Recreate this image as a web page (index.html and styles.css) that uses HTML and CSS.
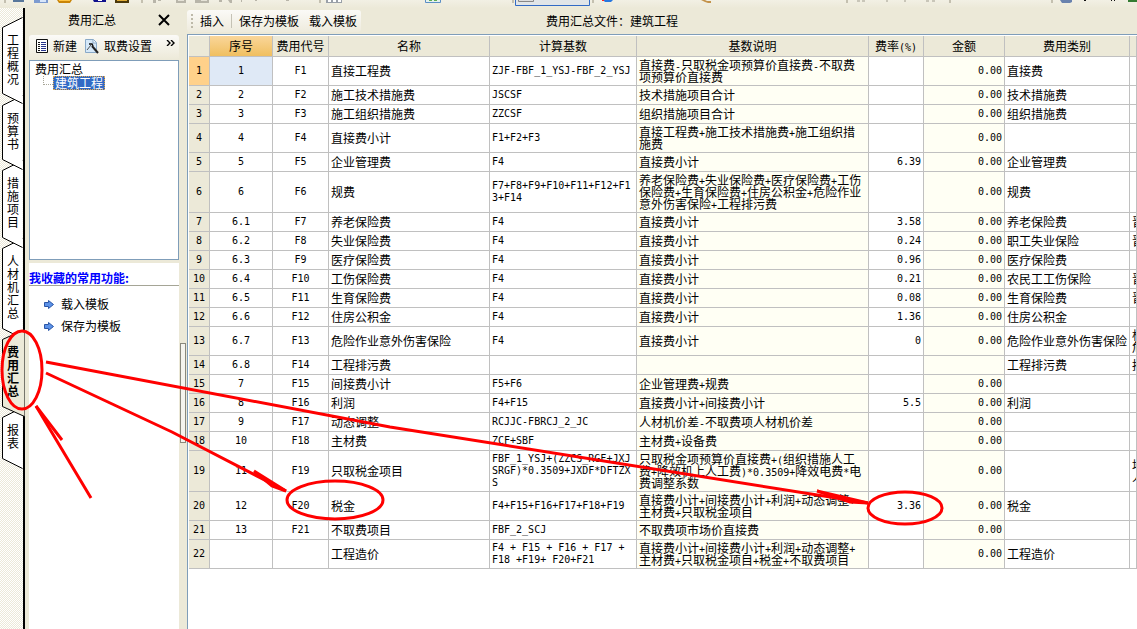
FILE: index.html
```html
<!DOCTYPE html>
<html lang="zh-CN">
<head>
<meta charset="utf-8">
<title>费用汇总</title>
<link rel="stylesheet" href="styles.css">
</head>
<body>
<header class="strip">
<svg class="strip-icons" width="1137" height="9" aria-hidden="true">
<g fill="#c4c0b0"><path d="M4 0h2v3h-2zM141 0h2v3h-2zM319 0h2v3h-2zM512 0h2v3h-2zM592 0h2v3h-2zM846 0h2v3h-2zM949 0h2v3h-2zM1051 0h2v3h-2z"/></g>
<path d="M13 0h11v2H13z" fill="#58779b"/><path d="M34 0h14v3H34z" fill="#7d9bd0"/><path d="M40 0h6v2h-6z" fill="#d8e6fa"/>
<path d="M57 0h15l-2 3H59z" fill="#c98508"/><path d="M59 0h11v1H59z" fill="#ffc444"/>
<path d="M93 0h13v2H94z" fill="#10108c"/><path d="M98 0h4v1h-4z" fill="#fff"/><path d="M115 0h14v3h-14z" fill="#4b380b"/><path d="M117 0h10v1h-10z" fill="#e0ad38"/>
<g fill="#b8b5a9"><path d="M153 0h3v3h-3zM158 0h3v1h-3zM176 0h10v3h-10zM195 0h14v3h-14zM219 0h3v2h-3zM228 0h4v3h-2zM241 0h1v2h-1zM255 0h2v1h-2zM286 0h3v1h-3z"/></g>
<path d="M178 0h6v1h-6zM201 0h6v1h-6z" fill="#e6e3d8"/>
<path d="M326 0h16v3h-16z" fill="#9aa0a8"/><path d="M328 0h3v2h-3zM333 0h3v2h-3zM338 0h3v2h-3z" fill="#fff"/>
<path d="M425.500 -1v3.500h15V-1" fill="#e5f1ee" stroke="#5b8fc6"/><path d="M429 0h3v1h-3zM434 0h3v1h-3z" fill="#5ead55"/>
<path d="M515.500-1v6.500h74V-1" fill="#e1e5e8" stroke="#316ac5"/><path d="M518.500 -1v2.500h15V-1" fill="#ddd" stroke="#888"/>
<path d="M603 0h10l-2 2h-6z" fill="#2878df"/><path d="M602 0h2v1h-2z" fill="#f22"/>
<path d="M701 0h4l2 1h4v2h-3l-3-1z" fill="#c3924b"/>
<g fill="#c9c6b9"><path d="M857 0h3v2h-3zM862 0h3v2h-3zM886 0h2v2h-2zM904 0h2v2h-2zM926 0h3v2h-3zM932 0h3v2h-3z"/></g>
<path d="M1060 0h12v2l-2 1h-8z" fill="#6982ae"/><path d="M1084 0h2v1h-2zM1111 0h1v1h-1zM1114 0h1v1h-1z" fill="#111"/><path d="M1128 0h9v2h-9z" fill="#347b32"/>
</svg>
</header>

<div class="workspace">
<nav class="tabs" aria-label="页面">
<button class="tab"><svg class="tab-shape" width="24" height="87"><path d="M22.500 .5L2.500 10.500V76.500L22.500 86.500"/></svg><span>工程概况</span></button>
<button class="tab"><svg class="tab-shape" width="24" height="75"><path d="M22.500 .5L2.500 10.500V64.500L22.500 74.500"/></svg><span>预算书</span></button>
<button class="tab"><svg class="tab-shape" width="24" height="88"><path d="M22.500 .5L2.500 10.500V77.500L22.500 87.500"/></svg><span>措施项目</span></button>
<button class="tab"><svg class="tab-shape" width="24" height="101"><path d="M22.500 .5L2.500 10.500V90.500L22.500 100.500"/></svg><span>人材机汇总</span></button>
<button class="tab tab-active"><svg class="tab-shape" width="24" height="88"><path d="M24.500 .5L2.500 10.500V77.500L24.500 87.500"/></svg><span>费用汇总</span></button>
<button class="tab"><svg class="tab-shape" width="24" height="62"><path d="M22.500 .5L2.500 10.500V51.500L22.500 61.500"/></svg><span>报表</span></button>
</nav>

<aside class="side">
<div class="side-title"><h2>费用汇总</h2><button class="icon-button" aria-label="关闭"><svg width="12" height="12"><path d="M1 1l10 10M11 1L1 11" stroke="#000" stroke-width="2"/></svg></button></div>
<div class="side-tools">
<button class="tool"><svg width="13" height="14"><path d="M.5.500h11v13H.5z" fill="#fff" stroke="#111"/><path d="M2 3h2M2 5h2M2 7h2M2 9h2M2 11h2" stroke="#111" transform="translate(0 .5)"/><path d="M5 3h5M5 5h5M5 7h5M5 9h5M5 11h5" stroke="#26348c" transform="translate(0 .5)"/></svg>新建</button>
<button class="tool"><svg width="15" height="15"><path d="M.5.500h8l3 3v10H.5z" fill="#d5e8f8" stroke="#89a9c8"/><path d="M8 1v3h3" fill="#fff" stroke="#89a9c8"/><path d="M2 11l4-5" fill="none" stroke="#555"/><path d="M4 5h3l1 2" fill="none" stroke="#111" stroke-width="1.500"/><path d="M7 7l6 7" stroke="#222" stroke-width="2"/></svg>取费设置</button>
<button class="more" aria-label="更多"><svg width="9" height="6"><path d="M1 0l3 3-3 3M5 0l3 3-3 3" fill="none" stroke="#000" stroke-width="1.400"/></svg></button>
</div>
<div class="tree"><div>费用汇总</div><div class="tree-child"><i class="branch"></i><span class="selected">建筑工程</span></div></div>
<section class="favorites">
<h3>我收藏的常用功能:</h3>
<button class="fav"><svg width="10" height="9"><path d="M.5 2.500h4V.5L9.500 4.500 4.500 8.500v-2h-4z" fill="#5c92e8" stroke="#2a55a6"/></svg>载入模板</button>
<button class="fav"><svg width="10" height="9"><path d="M.5 2.500h4V.5L9.500 4.500 4.500 8.500v-2h-4z" fill="#5c92e8" stroke="#2a55a6"/></svg>保存为模板</button>
</section>
</aside>
<div class="splitter"><i class="grip"></i></div>

<main class="main">
<div class="main-head">
<div class="main-tools"><i class="dots"></i><button class="text-button">插入</button><i class="sep"></i><button class="text-button">保存为模板</button><button class="text-button">载入模板</button></div>
<h1>费用汇总文件：建筑工程</h1>
</div>
<div class="grid">
<table>
<colgroup><col class="c-row"><col class="c-seq"><col class="c-code"><col class="c-name"><col class="c-base"><col class="c-desc"><col class="c-rate"><col class="c-sum"><col class="c-type"><col></colgroup>
<thead><tr><th></th><th class="current">序号</th><th>费用代号</th><th>名称</th><th>计算基数</th><th>基数说明</th><th>费率<b>(%)</b></th><th>金额</th><th>费用类别</th><th></th></tr></thead>
<tbody>
<tr class="two first"><th>1</th><td>1</td><td>F1</td><td>直接工程费</td><td>ZJF-FBF_1_YSJ-FBF_2_YSJ</td><td>直接费<b>-</b>只取税金项预算价直接费<b>-</b>不取费<br>项预算价直接费</td><td></td><td>0.00</td><td>直接费</td><td></td></tr>
<tr><th>2</th><td>2</td><td>F2</td><td>施工技术措施费</td><td>JSCSF</td><td>技术措施项目合计</td><td></td><td>0.00</td><td>技术措施费</td><td></td></tr>
<tr><th>3</th><td>3</td><td>F3</td><td>施工组织措施费</td><td>ZZCSF</td><td>组织措施项目合计</td><td></td><td>0.00</td><td>组织措施费</td><td></td></tr>
<tr class="two"><th>4</th><td>4</td><td>F4</td><td>直接费小计</td><td>F1+F2+F3</td><td>直接工程费<b>+</b>施工技术措施费<b>+</b>施工组织措<br>施费</td><td></td><td>0.00</td><td></td><td></td></tr>
<tr><th>5</th><td>5</td><td>F5</td><td>企业管理费</td><td>F4</td><td>直接费小计</td><td>6.39</td><td>0.00</td><td>企业管理费</td><td></td></tr>
<tr class="three"><th>6</th><td>6</td><td>F6</td><td>规费</td><td>F7+F8+F9+F10+F11+F12+F1<br>3+F14</td><td>养老保险费<b>+</b>失业保险费<b>+</b>医疗保险费<b>+</b>工伤<br>保险费<b>+</b>生育保险费<b>+</b>住房公积金<b>+</b>危险作业<br>意外伤害保险<b>+</b>工程排污费</td><td></td><td>0.00</td><td>规费</td><td></td></tr>
<tr><th>7</th><td>6.1</td><td>F7</td><td>养老保险费</td><td>F4</td><td>直接费小计</td><td>3.58</td><td>0.00</td><td>养老保险费</td><td>晋</td></tr>
<tr><th>8</th><td>6.2</td><td>F8</td><td>失业保险费</td><td>F4</td><td>直接费小计</td><td>0.24</td><td>0.00</td><td>职工失业保险</td><td>晋</td></tr>
<tr><th>9</th><td>6.3</td><td>F9</td><td>医疗保险费</td><td>F4</td><td>直接费小计</td><td>0.96</td><td>0.00</td><td>医疗保险费</td><td></td></tr>
<tr><th>10</th><td>6.4</td><td>F10</td><td>工伤保险费</td><td>F4</td><td>直接费小计</td><td>0.21</td><td>0.00</td><td>农民工工伤保险</td><td>晋</td></tr>
<tr><th>11</th><td>6.5</td><td>F11</td><td>生育保险费</td><td>F4</td><td>直接费小计</td><td>0.08</td><td>0.00</td><td>生育保险费</td><td>晋</td></tr>
<tr><th>12</th><td>6.6</td><td>F12</td><td>住房公积金</td><td>F4</td><td>直接费小计</td><td>1.36</td><td>0.00</td><td>住房公积金</td><td></td></tr>
<tr class="two"><th>13</th><td>6.7</td><td>F13</td><td>危险作业意外伤害保险</td><td>F4</td><td>直接费小计</td><td>0</td><td>0.00</td><td>危险作业意外伤害保险</td><td>根<br>危</td></tr>
<tr><th>14</th><td>6.8</td><td>F14</td><td>工程排污费</td><td></td><td></td><td></td><td></td><td>工程排污费</td><td>按</td></tr>
<tr><th>15</th><td>7</td><td>F15</td><td>间接费小计</td><td>F5+F6</td><td>企业管理费<b>+</b>规费</td><td></td><td>0.00</td><td></td><td></td></tr>
<tr><th>16</th><td>8</td><td>F16</td><td>利润</td><td>F4+F15</td><td>直接费小计<b>+</b>间接费小计</td><td>5.5</td><td>0.00</td><td>利润</td><td></td></tr>
<tr><th>17</th><td>9</td><td>F17</td><td>动态调整</td><td>RCJJC-FBRCJ_2_JC</td><td>人材机价差<b>-</b>不取费项人材机价差</td><td></td><td>0.00</td><td></td><td></td></tr>
<tr><th>18</th><td>10</td><td>F18</td><td>主材费</td><td>ZCF+SBF</td><td>主材费<b>+</b>设备费</td><td></td><td>0.00</td><td></td><td></td></tr>
<tr class="three"><th>19</th><td>11</td><td>F19</td><td>只取税金项目</td><td>FBF_1_YSJ+(ZZCS_RGF+JXJ<br>SRGF)*0.3509+JXDF*DFTZX<br>S</td><td>只取税金项预算价直接费<b>+(</b>组织措施人工<br>费<b>+</b>降效机上人工费<b>)*0.3509+</b>降效电费<b>*</b>电<br>费调整系数</td><td></td><td>0.00</td><td></td><td>地<br>人</td></tr>
<tr class="two"><th>20</th><td>12</td><td>F20</td><td>税金</td><td>F4+F15+F16+F17+F18+F19</td><td>直接费小计<b>+</b>间接费小计<b>+</b>利润<b>+</b>动态调整<b>+</b><br>主材费<b>+</b>只取税金项目</td><td>3.36</td><td>0.00</td><td>税金</td><td></td></tr>
<tr><th>21</th><td>13</td><td>F21</td><td>不取费项目</td><td>FBF_2_SCJ</td><td>不取费项市场价直接费</td><td></td><td>0.00</td><td></td><td></td></tr>
<tr class="two"><th>22</th><td></td><td></td><td>工程造价</td><td>F4 + F15 + F16 + F17 +<br>F18 +F19+ F20+F21</td><td>直接费小计<b>+</b>间接费小计<b>+</b>利润<b>+</b>动态调整<b>+</b><br>主材费<b>+</b>只取税金项目<b>+</b>税金<b>+</b>不取费项目</td><td></td><td>0.00</td><td>工程造价</td><td></td></tr>
</tbody>
</table>
</div>
</main>
</div>

<svg class="marks" width="1137" height="629" aria-hidden="true">
<ellipse cx="22" cy="370" rx="20" ry="39"/><ellipse cx="335" cy="500" rx="48" ry="19"/><ellipse cx="905" cy="508" rx="37" ry="16"/>
<path d="M46 362L390 427 868 503M46 373L172 432 286 491M91 498L36 406"/>
<path class="head" d="M36 406L62 440M286 491L254 471 272 486zM868 503L817 491 850 502z"/>
</svg>
</body>
</html>
```
FILE: styles.css
```css
* { box-sizing: border-box; }
body {
  margin: 0;
  min-height: 100vh;
  display: flex;
  flex-direction: column;
  overflow: hidden;
  background: #ece9d8;
  color: #000;
  font: 12px/12px "Noto Sans CJK SC", sans-serif;
}
h1, h2, h3 { margin: 0; font-size: 12px; font-weight: 400; }
button { border: 0; padding: 0; background: none; color: inherit; font: inherit; white-space: nowrap; }
svg { display: block; flex: none; }

.strip { height: 8px; overflow: hidden; background: linear-gradient(#f2f0e4, #ece9d8); }
.workspace { flex: 1; display: flex; min-width: 0; }

.tabs {
  width: 25px;
  flex: none;
  padding-top: 9px;
  border-right: 2px solid #000;
  background: repeating-conic-gradient(#ece9d8 0 25%, #fff 0 50%) 0 0 / 2px 2px;
}
.tab { position: relative; display: block; width: 24px; padding: 16px 5px 20px 7px; line-height: 13px; }
.tab + .tab { margin-top: -10px; }
.tab:nth-child(1) { z-index: 4; }
.tab:nth-child(2) { z-index: 3; }
.tab:nth-child(3) { z-index: 2; }
.tab:nth-child(4) { z-index: 1; }
.tab span { position: relative; display: block; width: 12px; white-space: normal; word-break: break-all; }
.tab-shape { position: absolute; top: 0; left: 0; fill: #fff; stroke: #000; }
.tab-active { z-index: 1; width: 25px; font-weight: 700; }
.tab-active .tab-shape { width: 25px; fill: #ece9d8; }

.side { width: 154px; flex: none; display: flex; flex-direction: column; padding-left: 4px; }
.side-title { height: 27px; display: flex; align-items: center; justify-content: space-between; padding: 0 9px 3px 39px; }
.side-tools { height: 25px; display: flex; align-items: center; gap: 8px; padding: 0 0 3px 7px; background: linear-gradient(#fbfaf7, #ece9d8); border-radius: 3px; }
.tool { display: flex; align-items: center; gap: 4px; }
.more { align-self: flex-start; margin: 5px 0 0 6px; }
.tree { height: 200px; padding: 2px 5px; border: 1px solid #7f9db9; background: #fff; }
.tree > div:first-child { height: 13px; }
.tree-child { display: flex; height: 14px; padding-left: 8px; }
.branch { width: 10px; height: 9px; border-left: 1px dotted #a8a698; border-bottom: 1px dotted #a8a698; }
.selected { height: 14px; padding: 0 1px; border: 1px dotted #e1a74c; background: #316ac5; color: #fff; }
.favorites { flex: 1; margin-top: 3px; padding-top: 9px; background: #fff; }
.favorites h3 { height: 14px; margin-bottom: 10px; border-bottom: 1px solid #a5a596; color: #00f; font-weight: 700; white-space: nowrap; }
.fav { display: flex; align-items: center; gap: 7px; height: 16px; margin: 0 0 6px 15px; }
.splitter { width: 8px; flex: none; padding: 335px 2px 0 1px; }
.grip { display: block; width: 6px; height: 100px; border: 1px solid #8a887c; background: #f5f4ee; }

.main { flex: 1; min-width: 0; display: flex; flex-direction: column; }
.main-head { height: 26px; display: flex; align-items: center; }
.main-tools { display: flex; align-items: center; height: 22px; gap: 7px; padding: 0 4px; border-radius: 3px; background: linear-gradient(#fbfaf7, #eeebdd); }
.text-button + .text-button { margin-left: 3px; }
.dots { width: 2px; height: 14px; background: repeating-linear-gradient(#bdb9a9 0 2px, transparent 2px 4px); }
.sep { width: 1px; height: 14px; background: #c5c2b5; }
.main-head h1 { margin-left: 185px; }
.grid { flex: 1; overflow: hidden; padding: 1px 0 0 1px; border: solid #7f9db9; border-width: 1px 0 0 1px; background: #fff; }
table { width: 100%; table-layout: fixed; border-collapse: separate; border-spacing: 0; }
.c-row { width: 21px; }
.c-seq { width: 63px; }
.c-code { width: 56px; }
.c-name { width: 161px; }
.c-base { width: 147px; }
.c-desc { width: 232px; }
.c-rate { width: 55px; }
.c-sum { width: 81px; }
.c-type { width: 125px; }
th, td { height: 19px; padding: 0 2px; border: solid #c0c0c0; border-width: 0 1px 1px 0; white-space: nowrap; overflow: hidden; text-align: left; font-weight: 400; }
th { padding: 0; background: #ece9d8; text-align: center; }
thead th { height: 21px; }
.current { background: linear-gradient(#fad69a, #f0bf60); }
b, tbody th, td:nth-child(2), td:nth-child(3), td:nth-child(5), td:nth-child(7), td:nth-child(8) { font-family: "DejaVu Sans Mono", monospace; font-size: 10px; font-weight: 400; line-height: 12px; }
td b, th b { line-height: 1px; }
.two td, .two th { height: 29px; }
.three td, .three th { height: 41px; }
td:nth-child(2), td:nth-child(3) { text-align: center; }
td:nth-child(7), td:nth-child(8) { text-align: right; }
td:nth-child(6), td:nth-child(8) { background: #fffff4; }
.first th { background: #ffd18a; }
.first td:nth-child(2) { background: #dfe9f6; }

.marks { position: absolute; z-index: 10; top: 0; left: 0; fill: none; stroke: #f00; stroke-width: 3; pointer-events: none; }
.head { fill: #f00; }
```
